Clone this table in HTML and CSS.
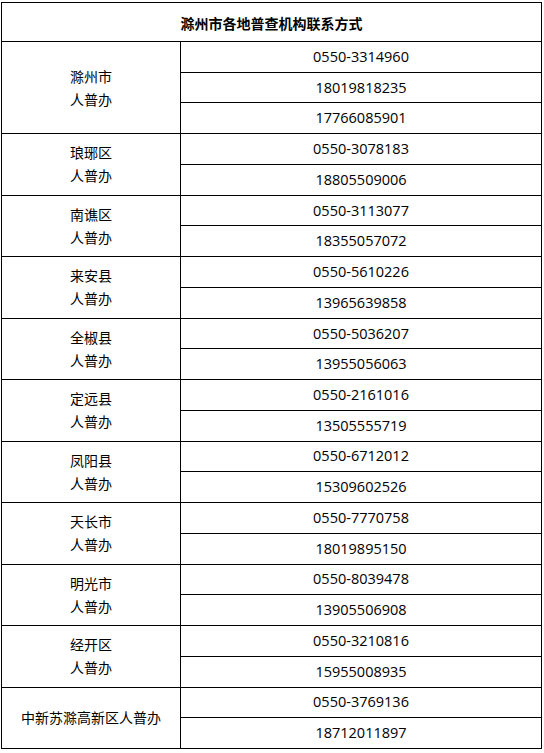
FILE: index.html
```html
<!DOCTYPE html>
<html lang="zh-CN">
<head>
<meta charset="utf-8">
<title>滁州市各地普查机构联系方式</title>
<link rel="stylesheet" href="styles.css">
</head>
<body>
<div class="sheet">
  <div class="title">滁州市各地普查机构联系方式</div>

  <div class="org span3">滁州市<br>人普办</div>
  <div class="tel">0550-3314960</div>
  <div class="tel">18019818235</div>
  <div class="tel">17766085901</div>

  <div class="org span2">琅琊区<br>人普办</div>
  <div class="tel">0550-3078183</div>
  <div class="tel">18805509006</div>

  <div class="org span2">南谯区<br>人普办</div>
  <div class="tel">0550-3113077</div>
  <div class="tel">18355057072</div>

  <div class="org span2">来安县<br>人普办</div>
  <div class="tel">0550-5610226</div>
  <div class="tel">13965639858</div>

  <div class="org span2">全椒县<br>人普办</div>
  <div class="tel">0550-5036207</div>
  <div class="tel">13955056063</div>

  <div class="org span2">定远县<br>人普办</div>
  <div class="tel">0550-2161016</div>
  <div class="tel">13505555719</div>

  <div class="org span2">凤阳县<br>人普办</div>
  <div class="tel">0550-6712012</div>
  <div class="tel">15309602526</div>

  <div class="org span2">天长市<br>人普办</div>
  <div class="tel">0550-7770758</div>
  <div class="tel">18019895150</div>

  <div class="org span2">明光市<br>人普办</div>
  <div class="tel">0550-8039478</div>
  <div class="tel">13905506908</div>

  <div class="org span2">经开区<br>人普办</div>
  <div class="tel">0550-3210816</div>
  <div class="tel">15955008935</div>

  <div class="org span2">中新苏滁高新区人普办</div>
  <div class="tel">0550-3769136</div>
  <div class="tel">18712011897</div>
</div>
</body>
</html>
```

FILE: styles.css
```css
html, body {
  margin: 0;
  padding: 0;
  background: #fff;
}

body {
  padding: 2px 0 0 1px;
  font-family: "Noto Sans CJK SC", sans-serif;
  color: #000;
}

.sheet {
  box-sizing: border-box;
  width: 541px;
  height: 747px;
  padding: 1px;
  background: #000;
  display: grid;
  grid-template-columns: 178px 360px;
  grid-template-rows: 38px repeat(23, 1fr);
  gap: 1px;
}

.sheet > div {
  background: #fff;
  display: flex;
  align-items: center;
  justify-content: center;
  text-align: center;
}

.title {
  grid-column: 1 / span 2;
  font-size: 14px;
  font-weight: 700;
  padding-top: 1px;
}

.org {
  grid-column: 1;
  font-size: 14px;
  line-height: 23px;
}

.span3 { grid-row: span 3; }
.span2 { grid-row: span 2; }

.tel {
  grid-column: 2;
  font-family: "Open Sans", "Noto Sans CJK SC", sans-serif;
  font-size: 14.5px;
  line-height: 20px;
}
```
